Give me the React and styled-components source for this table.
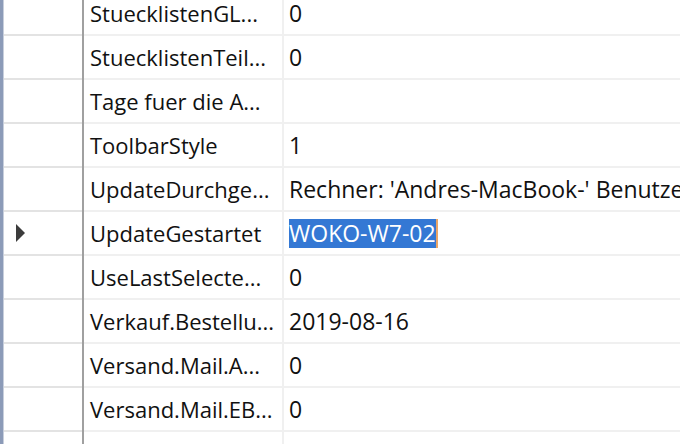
import React from 'react';
import styled, { createGlobalStyle } from 'styled-components';

const GlobalStyle = createGlobalStyle`
  html, body {
    margin: 0;
    padding: 0;
    background: #fff;
    overflow: hidden;
  }
  body {
    font-family: "Open Sans", "Noto Sans", sans-serif;
  }
`;

const rows = [
  { name: 'StuecklistenGL...', value: '0' },
  { name: 'StuecklistenTeil...', value: '0' },
  { name: 'Tage fuer die A...', value: '' },
  { name: 'ToolbarStyle', value: '1' },
  { name: 'UpdateDurchge...', value: "Rechner: 'Andres-MacBook-' Benutzer: 'Andre'" },
  { name: 'UpdateGestartet', value: 'WOKO-W7-02', current: true },
  { name: 'UseLastSelecte...', value: '0' },
  { name: 'Verkauf.Bestellu...', value: '2019-08-16' },
  { name: 'Versand.Mail.A...', value: '0' },
  { name: 'Versand.Mail.EB...', value: '0' },
  { name: 'Versand.Mail.MW...', value: '0' },
];

const Grid = () => (
  <Frame>
    <Edge />
    <Body>
      {rows.map((row) => (
        <Row key={row.name}>
          <RowHeader>{row.current && <Arrow />}</RowHeader>
          <Divider />
          <NameCell>{row.name}</NameCell>
          <ValueCell>
            {row.current ? <Selected>{row.value}</Selected> : row.value}
          </ValueCell>
        </Row>
      ))}
    </Body>
  </Frame>
);

const App = () => (
  <>
    <GlobalStyle />
    <Grid />
  </>
);

const Frame = styled.div`
  display: flex;
  width: 680px;
  height: 444px;
  overflow: hidden;
  background: #fff;
`;

const Edge = styled.div`
  flex: 0 0 3px;
  background: #8c9bb8;
  border-right: 1px solid #c8cfdc;
`;

const Body = styled.div`
  flex: 1;
  display: flex;
  flex-direction: column;
  margin-top: -8px;
`;

const Row = styled.div`
  display: grid;
  grid-template-columns: 78px 2px 200px 1fr;
  height: 44px;
  flex: 0 0 44px;
`;

const RowHeader = styled.div`
  border-bottom: 2px solid #e3e3e3;
  display: flex;
  align-items: center;
  padding-left: 12px;
`;

const Arrow = styled.span`
  width: 0;
  height: 0;
  border-top: 9px solid transparent;
  border-bottom: 9px solid transparent;
  border-left: 9px solid #3c3c3c;
`;

const Divider = styled.div`
  background: #a0a0a0;
`;

const Cell = styled.div`
  display: flex;
  align-items: center;
  border-bottom: 2px solid #f0f0f0;
  border-right: 2px solid #f0f0f0;
  font-size: 22px;
  color: #111;
  white-space: nowrap;
  overflow: hidden;
`;

const NameCell = styled(Cell)`
  padding-left: 6px;
`;

const ValueCell = styled(Cell)`
  padding-left: 5px;
  border-right: none;
  font-size: 23px;
`;

const Selected = styled.span`
  background: #3478d4;
  color: #fff;
  line-height: 29px;
  border-right: 2px solid #e9a567;
`;

export default App;
